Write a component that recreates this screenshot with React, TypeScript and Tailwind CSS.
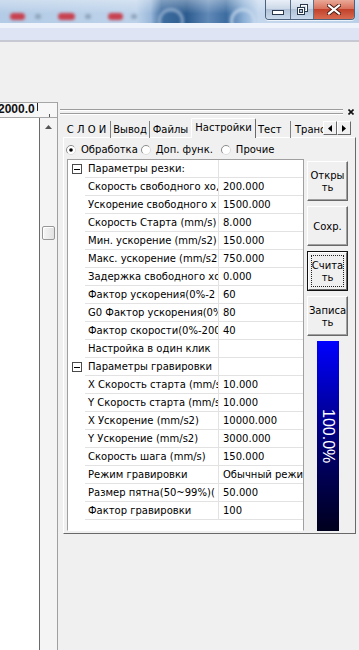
import React from 'react'

type Row = { name: string; value?: string; group?: boolean }

const ROWS: Row[] = [
  { name: 'Параметры резки:', group: true },
  { name: 'Скорость свободного хо,', value: '200.000' },
  { name: 'Ускорение свободного х', value: '1500.000' },
  { name: 'Скорость Старта (mm/s)', value: '8.000' },
  { name: 'Мин. ускорение (mm/s2)', value: '150.000' },
  { name: 'Макс. ускорение (mm/s2', value: '750.000' },
  { name: 'Задержка свободного хо', value: '0.000' },
  { name: 'Фактор ускорения(0%-2', value: '60' },
  { name: 'G0 Фактор ускорения(0%', value: '80' },
  { name: 'Фактор скорости(0%-200', value: '40' },
  { name: 'Настройка в один клик' },
  { name: 'Параметры гравировки', group: true },
  { name: 'X Скорость старта (mm/s', value: '10.000' },
  { name: 'Y Скорость старта (mm/s', value: '10.000' },
  { name: 'X Ускорение (mm/s2)', value: '10000.000' },
  { name: 'Y Ускорение (mm/s2)', value: '3000.000' },
  { name: 'Скорость шага (mm/s)', value: '150.000' },
  { name: 'Режим гравировки', value: 'Обычный режим' },
  { name: 'Размер пятна(50~99%)(', value: '50.000' },
  { name: 'Фактор гравировки', value: '100' },
]

// ── Aero title bar (blurred background + caption buttons) ─────
function TitleBar() {
  return (
    <div className="relative h-[23px] overflow-hidden flex justify-end pr-[4px] bg-[linear-gradient(90deg,#b3cbe6_0%,#bed3ea_38%,#9ab8da_42%,#3f6d9f_45%,#2c5b8f_52%,#6189b7_58%,#3c6ca0_63%,#8eb1d7_68%,#c4d7ed_72%,#b9d0e8_100%)]">
      <div className="absolute inset-0 bg-[linear-gradient(180deg,rgba(255,255,255,0.35),rgba(255,255,255,0)_60%)]" />
      <div className="absolute left-[10px] top-[13px] w-[15px] h-[7px] rounded-full bg-[#c8414f] blur-[1.5px]" />
      <div className="absolute left-[58px] top-[13px] w-[17px] h-[7px] rounded-full bg-[#c8414f] blur-[1.5px]" />
      <div className="absolute left-[108px] top-[13px] w-[15px] h-[7px] rounded-full bg-[#c8414f] blur-[1.5px]" />
      <div className="absolute left-[35px] top-[14px] w-[6px] h-[5px] rounded-full bg-[#8ea4bc] blur-[1.5px]" />
      <div className="absolute left-[85px] top-[14px] w-[6px] h-[5px] rounded-full bg-[#8ea4bc] blur-[1.5px]" />
      <div className="absolute left-[131px] top-[14px] w-[6px] h-[5px] rounded-full bg-[#8ea4bc] blur-[1.5px]" />
      <div className="absolute left-[158px] top-[8px] w-[26px] h-[26px] rounded-full border-[3px] border-[#a9c0da] opacity-70 blur-[1.5px]" />
      <div className="absolute left-[230px] top-[8px] w-[26px] h-[26px] rounded-full border-[3px] border-[#c9dbee] opacity-80 blur-[1.5px]" />

      <div className="relative flex h-[20px] rounded-b-[4px] border border-t-0 border-[#4c627c] overflow-hidden shadow-[0_1px_0_rgba(255,255,255,0.7)]">
        <div className="w-[25px] border-r border-[#5c7088] flex items-end justify-center pb-[4px] bg-[linear-gradient(180deg,#e9eff7,#cdd9e8_45%,#b1c2d8_50%,#cad9eb)]">
          <svg width="12" height="5" viewBox="0 0 12 5">
            <rect x="0.5" y="0.5" width="11" height="4" fill="#fff" stroke="#2a3a4c" strokeWidth="1" />
          </svg>
        </div>
        <div className="w-[23px] border-r border-[#5c7088] flex items-center justify-center bg-[linear-gradient(180deg,#e9eff7,#cdd9e8_45%,#b1c2d8_50%,#cad9eb)]">
          <svg width="11" height="11" viewBox="0 0 11 11">
            <rect x="3.5" y="0.5" width="7" height="7" fill="none" stroke="#2a3a4c" strokeWidth="1" />
            <rect x="4.5" y="1.5" width="5" height="5" fill="none" stroke="#fff" strokeWidth="1" />
            <rect x="0.5" y="3.5" width="7" height="7" fill="#fff" stroke="#2a3a4c" strokeWidth="1" />
            <rect x="2.5" y="5.5" width="3" height="3" fill="#b8c8dc" stroke="#2a3a4c" strokeWidth="1" />
          </svg>
        </div>
        <div className="w-[40px] flex items-center justify-center bg-[linear-gradient(180deg,#eaa997,#d8735e_45%,#c2422b_50%,#d76b51)]">
          <svg width="14" height="11" viewBox="0 0 14 11">
            <path d="M2 1.5 L12 9.5 M12 1.5 L2 9.5" stroke="#4a1a12" strokeWidth="4" strokeLinecap="square" />
            <path d="M2 1.5 L12 9.5 M12 1.5 L2 9.5" stroke="#fff" strokeWidth="2.2" strokeLinecap="square" />
          </svg>
        </div>
      </div>
    </div>
  )
}

// ── Left pane: ruler + white canvas + scrollbar ───────────────
function LeftPane() {
  return (
    <div className="w-[58px] flex flex-col border-r border-[#a0a0a0]">
      <div className="relative h-[16px] border-t border-b border-[#a6a6a6] bg-[#f7f7f7] overflow-hidden">
        <span className="block -ml-[2px] font-['Liberation_Sans',sans-serif] font-bold text-[12px] leading-[13px] text-[#111]">2000.0</span>
        <div className="absolute left-[37px] top-0 h-[8px] w-px bg-[#222]" />
        <div className="absolute left-[49px] bottom-0 h-[3px] w-px bg-[#555]" />
      </div>
      <div className="flex flex-1">
        <div className="w-[40px] bg-white border-r border-[#6a6a6a]" />
        <div className="flex-1 flex flex-col items-center bg-[#f4f4f4]">
          <div className="h-[17px] flex items-center justify-center">
            <svg width="7" height="4" viewBox="0 0 7 4">
              <path d="M0 4 L3.5 0 L7 4 Z" fill="#555" />
            </svg>
          </div>
          <div className="h-[91px]" />
          <div className="w-[13px] h-[14px] rounded-[2px] border border-[#979797] bg-[linear-gradient(90deg,#f6f6f6,#e2e2e2)] shadow-[inset_1px_1px_0_#fff]" />
        </div>
      </div>
    </div>
  )
}

function Radio({ checked }: { checked?: boolean }) {
  return (
    <svg width="10" height="10" viewBox="0 0 10 10" className="shrink-0">
      <circle cx="5" cy="5" r="4.5" fill="#fff" />
      <path d="M1.8 8.2 A4.5 4.5 0 0 1 8.2 1.8" fill="none" stroke="#8a8a8a" strokeWidth="1" />
      <path d="M8.2 1.8 A4.5 4.5 0 0 1 1.8 8.2" fill="none" stroke="#dcdcdc" strokeWidth="1" />
      {checked && <circle cx="5" cy="5" r="1.8" fill="#000" />}
    </svg>
  )
}

function Minus() {
  return (
    <div className="w-[10px] h-[10px] border border-[#4a4a4a] bg-white flex items-center justify-center">
      <div className="w-[6px] h-px bg-black" />
    </div>
  )
}

function Button({ lines }: { lines: string[] }) {
  return (
    <div className="h-[40px] w-full bg-[#f0f0f0] border border-t-white border-l-white border-r-[#696969] border-b-[#696969] shadow-[inset_-1px_-1px_0_#a0a0a0] flex flex-col items-center justify-center leading-[12px] pt-[2px]">
      {lines.map(l => <span key={l}>{l}</span>)}
    </div>
  )
}

function DefaultButton({ lines }: { lines: string[] }) {
  return (
    <div className="h-[40px] w-full bg-[#f0f0f0] border border-[#111]">
      <div className="h-full border border-t-white border-l-white border-r-[#696969] border-b-[#696969] p-[2px]">
        <div className="h-full border border-dotted border-[#222] flex flex-col items-center justify-center leading-[12px] pt-[1px]">
          {lines.map(l => <span key={l}>{l}</span>)}
        </div>
      </div>
    </div>
  )
}

// ── Right dock: tabs + property grid ──────────────────────────
function Dock() {
  return (
    <div className="flex-1 flex flex-col">
      {/* grip + close */}
      <div className="h-[16px] flex items-center pl-[2px] pr-[5px] gap-[5px] pt-[3px]">
        <div className="flex-1 h-[5px] border-y border-[#9c9c9c] shadow-[0_1px_0_#fff,inset_0_1px_0_#fff]" />
        <svg width="6" height="6" viewBox="0 0 6 6">
          <path d="M0.5 0.5 L5.5 5.5 M5.5 0.5 L0.5 5.5" stroke="#111" strokeWidth="1.6" />
        </svg>
      </div>

      {/* tab strip */}
      <div className="relative z-10 -mb-px h-[20px] flex items-end pl-[5px]">
        <div className="w-[260px] flex items-end overflow-hidden">
          <div className="h-[17px] w-[48px] shrink-0 border-r border-[#808080] flex items-center justify-center">С Л О И</div>
          <div className="h-[17px] w-[39px] shrink-0 border-r border-[#808080] flex items-center justify-center">Вывод</div>
          <div className="h-[17px] w-[41px] shrink-0 flex items-center justify-center">Файлы</div>
          <div className="h-[20px] w-[65px] shrink-0 bg-[#f0f0f0] border-l border-t border-r border-l-white border-t-white border-r-[#696969] rounded-t-[2px] flex items-center justify-center pb-[1px]">Настройки</div>
          <div className="h-[17px] w-[35px] shrink-0 border-r border-[#808080] flex items-center pl-[2px]">Тест</div>
          <div className="h-[17px] w-[40px] shrink-0 flex items-center pl-[4px] whitespace-nowrap">Транс</div>
        </div>
        <div className="flex mb-[3px]">
          <div className="w-[14px] h-[14px] bg-[#f0f0f0] border border-t-white border-l-white border-r-[#696969] border-b-[#696969] flex items-center justify-center">
            <svg width="4" height="7" viewBox="0 0 4 7"><path d="M4 0 L0 3.5 L4 7 Z" fill="#000" /></svg>
          </div>
          <div className="w-[14px] h-[14px] bg-[#f0f0f0] border border-t-white border-l-white border-r-[#696969] border-b-[#696969] flex items-center justify-center">
            <svg width="4" height="7" viewBox="0 0 4 7"><path d="M0 0 L4 3.5 L0 7 Z" fill="#000" /></svg>
          </div>
        </div>
      </div>

      {/* tab page */}
      <div className="ml-[5px] w-[293px] flex flex-col pb-[2px] border border-t-white border-l-white border-r-[#696969] border-b-[#696969]">
        <div className="h-[21px] flex items-center pt-[2px] pl-[2px]">
          <Radio checked />
          <span className="ml-[5px]">Обработка</span>
          <span className="ml-[3px]"><Radio /></span>
          <span className="ml-[5px]">Доп. функ.</span>
          <span className="ml-[8px]"><Radio /></span>
          <span className="ml-[5px]">Прочие</span>
        </div>

        <div className="flex pl-[3px]">
          {/* property grid */}
          <div className="w-[237px] h-[372px] overflow-hidden bg-white border border-t-[#a0a0a0] border-l-[#a0a0a0] border-r-[#a0a0a0] border-b-white">
            {ROWS.map((r, i) => (
              <div key={i} className="flex h-[18px]">
                <div className="w-[17px] shrink-0 flex items-center justify-center">
                  {r.group && <Minus />}
                </div>
                <div className="w-[134px] shrink-0 border-b border-r border-[#e2e2e2] pl-[3px] flex items-center overflow-hidden whitespace-nowrap">
                  {r.name}
                </div>
                <div className="flex-1 min-w-0 border-b border-[#e2e2e2] pl-[4px] flex items-center overflow-hidden whitespace-nowrap">
                  {r.value ?? ''}
                </div>
              </div>
            ))}
          </div>

          {/* buttons + progress */}
          <div className="ml-[3px] w-[41px] flex flex-col items-center gap-[5px] pt-[2px]">
            <Button lines={['Откры', 'ть']} />
            <Button lines={['Сохр.']} />
            <DefaultButton lines={['Счита', 'ть']} />
            <Button lines={['Записа', 'ть']} />
            <div className="w-[22px] h-[190px] bg-[linear-gradient(180deg,#0000ff,#000070_55%,#00001e)] flex items-center justify-center">
              <span className="[writing-mode:vertical-rl] font-['Liberation_Sans',sans-serif] text-[16px] leading-none text-white">100.0%</span>
            </div>
          </div>
        </div>
      </div>
    </div>
  )
}

export default function App() {
  return (
    <div className="w-[359px] h-[650px] overflow-hidden bg-[#f0f0f0] flex flex-col font-['DejaVu_Sans',sans-serif] text-[10px] leading-none text-black">
      <TitleBar />
      <div className="h-[5px] bg-[#eef2fa]" />
      <div className="h-[14px] bg-[#dfe4f5] border-b-2 border-[#c6c9d2]" />
      <div className="h-[60px] shrink-0" />
      <div className="flex flex-1 min-h-0">
        <LeftPane />
        <Dock />
      </div>
    </div>
  )
}
